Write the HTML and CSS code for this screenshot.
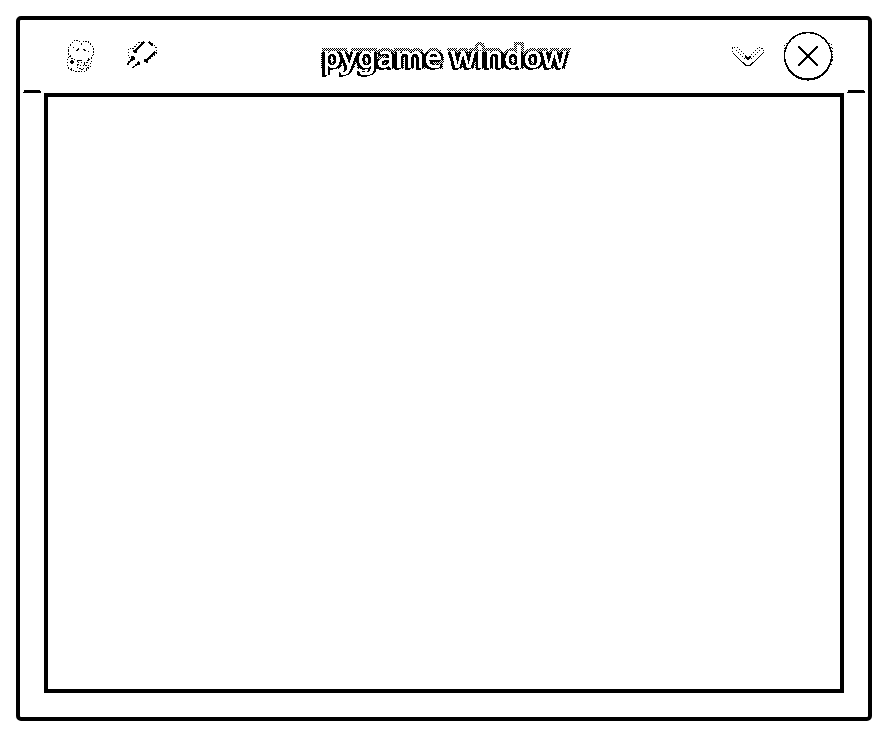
FILE: index.html
```
<!DOCTYPE html>
<html lang="en">
<head>
<meta charset="utf-8">
<title>pygame window</title>
<link rel="stylesheet" href="styles.css">
</head>
<body>
<main class="window">
  <header class="titlebar">
    <svg class="icon snake" width="34" height="38" viewBox="63 37 34 38">
      <path class="dots" d="M68.5 50.5Q68 46 72 44Q73 40 77 40.5Q80 41 81.500 44Q83 41 87 41.500Q90 42 91 45Q93.500 47 93.500 52Q93 59 87 60.500M68.500 50.500Q68 58 76 60.500"/>
      <path class="dots" d="M71 55Q67 57 67 63Q67 68 71 70Q77 72.500 84 71.500Q88 70 91 66M91 58Q93 62 89 65M77 61V67Q79 70 84 69"/>
      <path class="dots" d="M78 62.500H89M77 65.500H89M80 68.500H88"/>
      <path class="solid" d="M76 50h1v-1h1v-1h1v2h-1v1h-2zM83 49h2v1h1v1h-2v-1h-1zM71 60h2v1h1v2h-1v1h-2v-1h-1v-2h1zM73 47h1v1h-1zM88 51h1v1h-1zM77 60h5v1h-5zM88 58h1v3h-1zM84 63h1v2h-1zM77 64h2v1h-2zM87 67h2v1h-2zM71 68h1v3h-1zM86 69h1v2h-1z"/>
    </svg>
    <svg class="icon pin" width="36" height="34" viewBox="124 38 36 34">
      <g filter="url(#mono)">
        <path d="M124 38h36v34h-36z" fill="#fff"/>
        <path class="thick" d="M135 51L144 42M146 61L155 52M149 42L153 46"/>
      </g>
      <path class="dots" d="M133 49L139 42H146M128.500 56V49L132 48L134 50M152 43L156.500 48V53L149 60M130 57L128 59"/>
      <path class="solid" d="M133 50h3v1h1v2h-3v-1h-1zM131 56h3v1h1v3h-2v1h-2v1h-1v1h-1v2h-2v-2h1v-2h2v-2h1zM138 61h1v1h1v3h-3v1h-2v1h-1v1h-2v-1h1v-1h2v-2h2v-2h1zM144 59h4v4h-2v-1h-2z"/>
    </svg>
    <svg class="caption" width="260" height="48" viewBox="314 35 260 48">
      <defs>
        <pattern id="dither" width="2" height="2" patternUnits="userSpaceOnUse">
          <path d="M0 0h1v1h-1zM1 1h1v1h-1z" fill="#000"/>
        </pattern>
        <clipPath id="lower"><path d="M314 52h260v31h-260z"/></clipPath>
        <clipPath id="upper"><path d="M314 35h260v17h-260z"/></clipPath>
        <clipPath id="body"><path d="M314 35h260v34h-260z"/></clipPath>
        <filter id="mono" x="0" y="0" width="1" height="1" color-interpolation-filters="sRGB">
          <feComponentTransfer>
            <feFuncR type="discrete" tableValues="0 1"/>
            <feFuncG type="discrete" tableValues="0 1"/>
            <feFuncB type="discrete" tableValues="0 1"/>
          </feComponentTransfer>
        </filter>
      </defs>
      <g filter="url(#mono)">
        <path d="M314 35h260v48h-260z" fill="#fff"/>
        <g clip-path="url(#body)"><use href="#label" fill="url(#dither)" stroke="url(#dither)" stroke-width="6"/></g>
        <g clip-path="url(#upper)"><use href="#label" y="1" fill="#fff" stroke="#fff" stroke-width="1"/></g>
        <g clip-path="url(#lower)"><use href="#label" x="-2" y="1" fill="#000" stroke="#000" stroke-width="1.500"/></g>
        <g clip-path="url(#lower)"><use href="#label" x="2" y="0" fill="#000" stroke="#000" stroke-width="1"/></g>
        <g fill="#fff"><text id="label" x="322" y="68" textLength="245" lengthAdjust="spacingAndGlyphs">pygame window</text></g>
      </g>
    </svg>
    <svg class="icon chevron" width="36" height="26" viewBox="730 43 36 26">
      <path class="dots" d="M732.500 52V48L737 47L747 57M749 57L759 47L763.500 49V53M736 50L745 59M751 59L761 49"/>
      <path class="line" d="M733 53L742 62L746 65.500H750L754 62L763 53"/>
      <path class="solid" d="M745 56h2v1h2v-1h2v2h-1v1h-1v1h-2v-1h-1v-1h-1z"/>
    </svg>
    <svg class="close" width="54" height="52" viewBox="781 30 54 52">
      <g filter="url(#mono)">
        <path d="M781 30h54v52h-54z" fill="#fff"/>
        <circle class="ring" cx="808" cy="56" r="23.5"/>
        <path class="ring heavy" d="M786 64Q792 79 808 79.500Q824 79 830 64"/>
        <path class="cross" d="M798 46L818 66M818 46L798 66"/>
      </g>
      <path class="dots" shape-rendering="crispEdges" d="M784.500 45V62M786.500 43V48M829.500 43V48M831.500 44V66M832.500 48V62"/>
    </svg>
  </header>
  <div class="notches"><i></i><i></i></div>
  <section class="canvas"></section>
</main>
</body>
</html>
```
FILE: styles.css
```
* { box-sizing: border-box; }
html, body { margin: 0; background: #fff; }
body { padding: 16px; height: 737px; overflow: hidden; }
.window {
  width: 856px;
  height: 705px;
  border: 4px solid #000;
  border-radius: 5px;
  display: flex;
  flex-direction: column;
}
.titlebar {
  height: 70px;
  flex: none;
  display: flex;
  align-items: flex-start;
  padding-left: 43px;
}
svg { display: block; flex: none; }
.icon { shape-rendering: crispEdges; }
.snake { margin-top: 17px; }
.pin { margin: 18px 0 0 27px; }
.caption { margin: 15px 0 0 154px; }
.chevron { margin: 23px 0 0 156px; }
.close { margin: 10px 0 0 15px; }
.caption text { font: 500 31px "Noto Sans", sans-serif; }
.dots, .line, .thick, .ring, .cross { fill: none; stroke: #000; }
.dots { stroke-width: 1; stroke-dasharray: 1.4 1.4; }
.line { stroke-width: 1.3; }
.thick { stroke-width: 2.4; }
.solid { fill: #000; }
.ring { stroke-width: 1.5; }
.heavy { stroke-width: 1.8; }
.cross { stroke-width: 1.9; }
.notches {
  height: 3px;
  flex: none;
  display: flex;
  justify-content: space-between;
  padding: 0 3px;
}
.notches i { width: 18px; height: 3px; background: #000; clip-path: polygon(1px 0, 17px 0, 17px 1px, 18px 1px, 18px 3px, 0 3px, 0 2px, 1px 2px); }
.canvas { width: 800px; height: 600px; border: 4px solid #000; margin-left: 24px; flex: none; }
```
